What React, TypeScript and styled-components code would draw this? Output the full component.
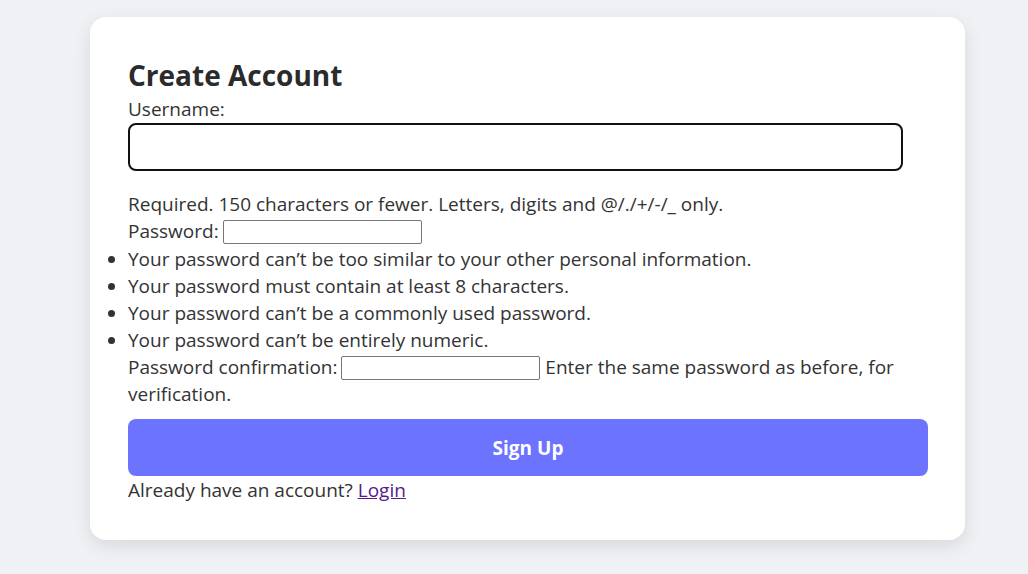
import React from "react";
import styled, { createGlobalStyle } from "styled-components";

const Global = createGlobalStyle`
  html, body { margin: 0; padding: 0; }
  body {
    background: #f0f1f5;
    font-family: "Open Sans", "Noto Sans", "Liberation Sans", sans-serif;
    color: #333;
  }
`;

const Page = styled.div`
  padding: 17px 0 30px 90px;
`;

const Card = styled.div`
  width: 800px;
  background: #fff;
  border-radius: 16px;
  padding: 41px 37px 36px 38px;
  box-shadow: 0 6px 18px rgba(0, 0, 0, 0.1);
  font-size: 19px;
  line-height: 27px;
`;

const Title = styled.h2`
  margin: 0 0 4px;
  font-size: 28px;
  line-height: 34px;
  font-weight: 700;
  color: #2b2b2b;
`;

const Line = styled.div`
  margin: 0;
`;

const BigInput = styled.input`
  display: block;
  box-sizing: border-box;
  width: 775px;
  height: 48px;
  margin: 0 0 20px;
  border: 2px solid #111;
  border-radius: 8px;
  padding: 0 12px;
  font-size: 16px;
  outline: none;
`;

const SmallInput = styled.input`
  box-sizing: border-box;
  width: 199px;
  height: 24px;
  border: 1px solid #767676;
  border-radius: 2px;
  padding: 1px 2px;
  font-size: 13px;
  vertical-align: middle;
  margin: 0 0 0 -1px;
  position: relative;
  top: -1px;
`;

const Rules = styled.ul`
  margin: 1px 0 0;
  padding: 0;
  list-style: disc outside;
`;

const Button = styled.button`
  display: block;
  width: 800px;
  height: 57px;
  margin: 11px 0 1px;
  border: none;
  border-radius: 8px;
  background: #6c74ff;
  color: #fff;
  font-family: inherit;
  font-size: 19px;
  font-weight: 700;
  cursor: pointer;
`;

const Link = styled.a`
  color: #551a8b;
  text-decoration: underline;
`;

export default function App() {
  return (
    <>
      <Global />
      <Page>
        <Card>
          <Title>Create Account</Title>
          <Line>Username:</Line>
          <BigInput type="text" />
          <Line>Required. 150 characters or fewer. Letters, digits and @/./+/-/_ only.</Line>
          <Line>
            Password: <SmallInput type="password" />
          </Line>
          <Rules>
            <li>Your password can’t be too similar to your other personal information.</li>
            <li>Your password must contain at least 8 characters.</li>
            <li>Your password can’t be a commonly used password.</li>
            <li>Your password can’t be entirely numeric.</li>
          </Rules>
          <Line>
            Password confirmation: <SmallInput type="password" /> Enter the same password as before, for verification.
          </Line>
          <Button>Sign Up</Button>
          <Line>
            Already have an account? <Link href="#">Login</Link>
          </Line>
        </Card>
      </Page>
    </>
  );
}
